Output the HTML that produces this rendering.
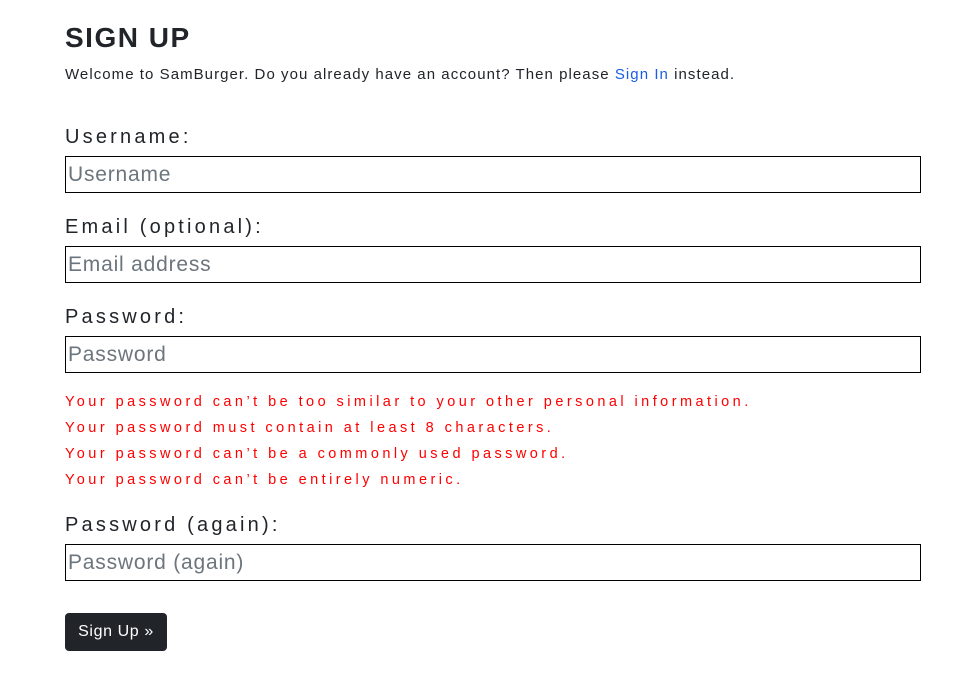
<!DOCTYPE html>
<html><head><meta charset="utf-8"><style>
*{margin:0;padding:0;box-sizing:border-box}
body{width:977px;height:688px;background:#fff;font-family:"Liberation Sans",sans-serif;color:#212529;position:relative;overflow:hidden}
.a{position:absolute;left:65px;white-space:nowrap}
h1{font-size:28px;font-weight:bold;letter-spacing:1.5px;line-height:30px;top:23px}
.sub{font-size:15px;letter-spacing:1.05px;line-height:20px;top:65px}
.sub span{color:#1a5ce6}
.lbl{font-size:20px;letter-spacing:3.2px;line-height:24px}
.in{width:856px;height:37px;border:1px solid #000;font-size:21px;letter-spacing:0.8px;color:#6c757d;line-height:36px;padding-left:2px}
.err{color:#f00;font-size:14.5px;letter-spacing:3.45px;line-height:20px}
.btn{top:613px;width:102px;height:38px;background:#212529;color:#fff;border-radius:4px;font-size:16px;letter-spacing:0.6px;line-height:38px;text-align:center}
</style></head><body>
<h1 class="a">SIGN UP</h1>
<div class="a sub">Welcome to SamBurger. Do you already have an account? Then please <span>Sign In</span> instead.</div>
<div class="a lbl" style="top:125px">Username:</div>
<div class="a in" style="top:156px">Username</div>
<div class="a lbl" style="top:215px">Email (optional):</div>
<div class="a in" style="top:246px">Email address</div>
<div class="a lbl" style="top:305px">Password:</div>
<div class="a in" style="top:336px">Password</div>
<div class="a err" style="top:392px">Your password can’t be too similar to your other personal information.</div>
<div class="a err" style="top:418px">Your password must contain at least 8 characters.</div>
<div class="a err" style="top:444px">Your password can’t be a commonly used password.</div>
<div class="a err" style="top:470px">Your password can’t be entirely numeric.</div>
<div class="a lbl" style="top:513px">Password (again):</div>
<div class="a in" style="top:544px">Password (again)</div>
<div class="a btn">Sign Up »</div>
</body></html>
